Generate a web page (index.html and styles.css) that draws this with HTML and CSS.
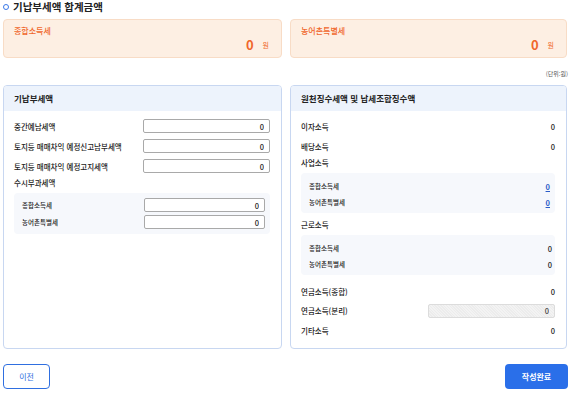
FILE: index.html
```html
<!DOCTYPE html>
<html lang="ko">
<head>
    <meta charset="UTF-8">
    <title>기납부세액 합계금액</title>
    <link rel="stylesheet" href="styles.css">
</head>
<body>
<div class="page">
    <h1 class="title"><span class="title-dot"></span>기납부세액 합계금액</h1>

    <div class="summary">
        <div class="sum-box">
            <div class="sum-label">종합소득세</div>
            <div class="sum-value"><b>0</b><span>원</span></div>
        </div>
        <div class="sum-box">
            <div class="sum-label">농어촌특별세</div>
            <div class="sum-value"><b>0</b><span>원</span></div>
        </div>
    </div>

    <div class="unit">(단위:원)</div>

    <div class="panels">
        <div class="panel">
            <div class="panel-head">기납부세액</div>
            <div class="panel-body left-body">
                <div class="form-row">
                    <label>중간예납세액</label>
                    <input type="text" value="0">
                </div>
                <div class="form-row">
                    <label>토지등 매매차익 예정신고납부세액</label>
                    <input type="text" value="0">
                </div>
                <div class="form-row">
                    <label>토지등 매매차익 예정고지세액</label>
                    <input type="text" value="0">
                </div>
                <div class="section-label">수시부과세액</div>
                <div class="sub-box">
                    <div class="form-row sub">
                        <label>종합소득세</label>
                        <input type="text" value="0">
                    </div>
                    <div class="form-row sub">
                        <label>농어촌특별세</label>
                        <input type="text" value="0">
                    </div>
                </div>
            </div>
        </div>

        <div class="panel">
            <div class="panel-head">원천징수세액 및 납세조합징수액</div>
            <div class="panel-body right-body">
                <div class="info-row"><span>이자소득</span><span>0</span></div>
                <div class="info-row"><span>배당소득</span><span>0</span></div>
                <div class="group-label">사업소득</div>
                <div class="sub-box info-box">
                    <div class="info-row sub"><span>종합소득세</span><a href="#">0</a></div>
                    <div class="info-row sub"><span>농어촌특별세</span><a href="#">0</a></div>
                </div>
                <div class="group-label gap">근로소득</div>
                <div class="sub-box info-box">
                    <div class="info-row sub"><span>종합소득세</span><span>0</span></div>
                    <div class="info-row sub"><span>농어촌특별세</span><span>0</span></div>
                </div>
                <div class="info-row wide first"><span>연금소득(종합)</span><span>0</span></div>
                <div class="info-row input-row"><span>연금소득(분리)</span><input type="text" value="0" disabled></div>
                <div class="info-row wide"><span>기타소득</span><span>0</span></div>
            </div>
        </div>
    </div>

    <div class="footer">
        <button class="btn-prev">이전</button>
        <button class="btn-done">작성완료</button>
    </div>
</div>
</body>
</html>
```

FILE: styles.css
```css
body {
    margin: 0;
    font-family: "Noto Sans CJK KR", "Noto Sans", sans-serif;
    color: #222;
    background-color: #fff;
}

.page {
    width: 565px;
    padding-left: 3px;
}

.title {
    display: flex;
    align-items: center;
    gap: 4px;
    margin: 0;
    height: 14px;
    font-size: 10.5px;
    font-weight: bold;
    line-height: 14px;
}

.title-dot {
    width: 4px;
    height: 4px;
    border: 1.5px solid #3a78e8;
    border-radius: 50%;
}

.summary {
    display: grid;
    grid-template-columns: 279px 277px;
    gap: 8px;
    margin-top: 5px;
}

.sum-box {
    box-sizing: border-box;
    height: 39px;
    padding: 5px 12px 0 10px;
    background-color: #fdefe3;
    border: 1px solid #f8dcc6;
    border-radius: 4px;
}

.sum-label {
    font-size: 8px;
    font-weight: 500;
    color: #f0672c;
    line-height: 12px;
}

.sum-value {
    display: flex;
    justify-content: flex-end;
    align-items: center;
    gap: 9px;
    color: #f0672c;
}

.sum-value b {
    font-size: 13px;
    line-height: 16px;
}

.sum-value span {
    font-size: 7px;
}

.unit {
    margin-top: 11px;
    text-align: right;
    font-size: 6px;
    color: #555;
    line-height: 10px;
}

.panels {
    display: grid;
    grid-template-columns: 279px 277px;
    gap: 8px;
    margin-top: 6px;
}

.panel {
    border: 1px solid #c8d7f1;
    border-radius: 4px;
    overflow: hidden;
}

.panel-head {
    height: 25px;
    padding-left: 10px;
    background-color: #edf3fc;
    font-size: 8.5px;
    font-weight: bold;
    line-height: 25px;
}

.panel-body {
    padding: 8px 11px 8px 10px;
}

.right-body {
    padding-top: 5px;
}

.form-row {
    display: flex;
    justify-content: space-between;
    align-items: center;
    height: 14px;
    margin-bottom: 6px;
}

label, .info-row span, .group-label, .section-label {
    font-size: 7.5px;
    font-weight: 500;
    color: #222;
}

input {
    width: 127px;
    height: 14px;
    box-sizing: border-box;
    padding: 0 5px;
    border: 1px solid #a9a9a9;
    border-radius: 2px;
    font-family: inherit;
    font-size: 7.5px;
    font-weight: 500;
    text-align: right;
    color: #222;
}

.section-label {
    margin-top: -2px;
    line-height: 12px;
}

.sub-box {
    margin-top: 4px;
    padding: 5px 5px 5px 8px;
    background-color: #f6f8fc;
    border-radius: 4px;
}

.form-row.sub {
    margin-bottom: 3px;
}

.form-row.sub:last-child {
    margin-bottom: 0;
}

.form-row.sub label {
    font-size: 6.5px;
}

.form-row.sub input {
    width: 121px;
}

.info-row {
    display: flex;
    justify-content: space-between;
    align-items: center;
    height: 20px;
}

.group-label {
    height: 14px;
    line-height: 14px;
}

.group-label.gap {
    margin-top: 5px;
}

.info-box {
    margin-top: 3px;
    padding: 5px 3px 3px 8px;
}

.info-row.sub {
    height: 16px;
}

.info-row.sub span:first-child {
    font-size: 6.5px;
}

.info-row a {
    font-size: 7.5px;
    color: #2a5cc8;
    font-weight: bold;
    margin-right: 2px;
}

.info-row.first {
    margin-top: 6px;
}

.input-row {
    height: 19px;
}

.input-row input {
    background: repeating-linear-gradient(45deg, #ececec 0, #ececec 1px, #f3f3f3 1px, #f3f3f3 2px);
    border-color: #dcdcdc;
    color: #444;
}

.footer {
    display: flex;
    justify-content: space-between;
    margin-top: 15px;
}

button {
    height: 25px;
    border-radius: 4px;
    font-family: inherit;
    font-size: 8px;
    cursor: pointer;
}

.btn-prev {
    width: 47px;
    background-color: #fff;
    border: 1px solid #2f6fe0;
    color: #2f6fe0;
}

.btn-done {
    width: 63px;
    background-color: #2a6fe9;
    border: none;
    color: #fff;
    font-weight: bold;
}
```
